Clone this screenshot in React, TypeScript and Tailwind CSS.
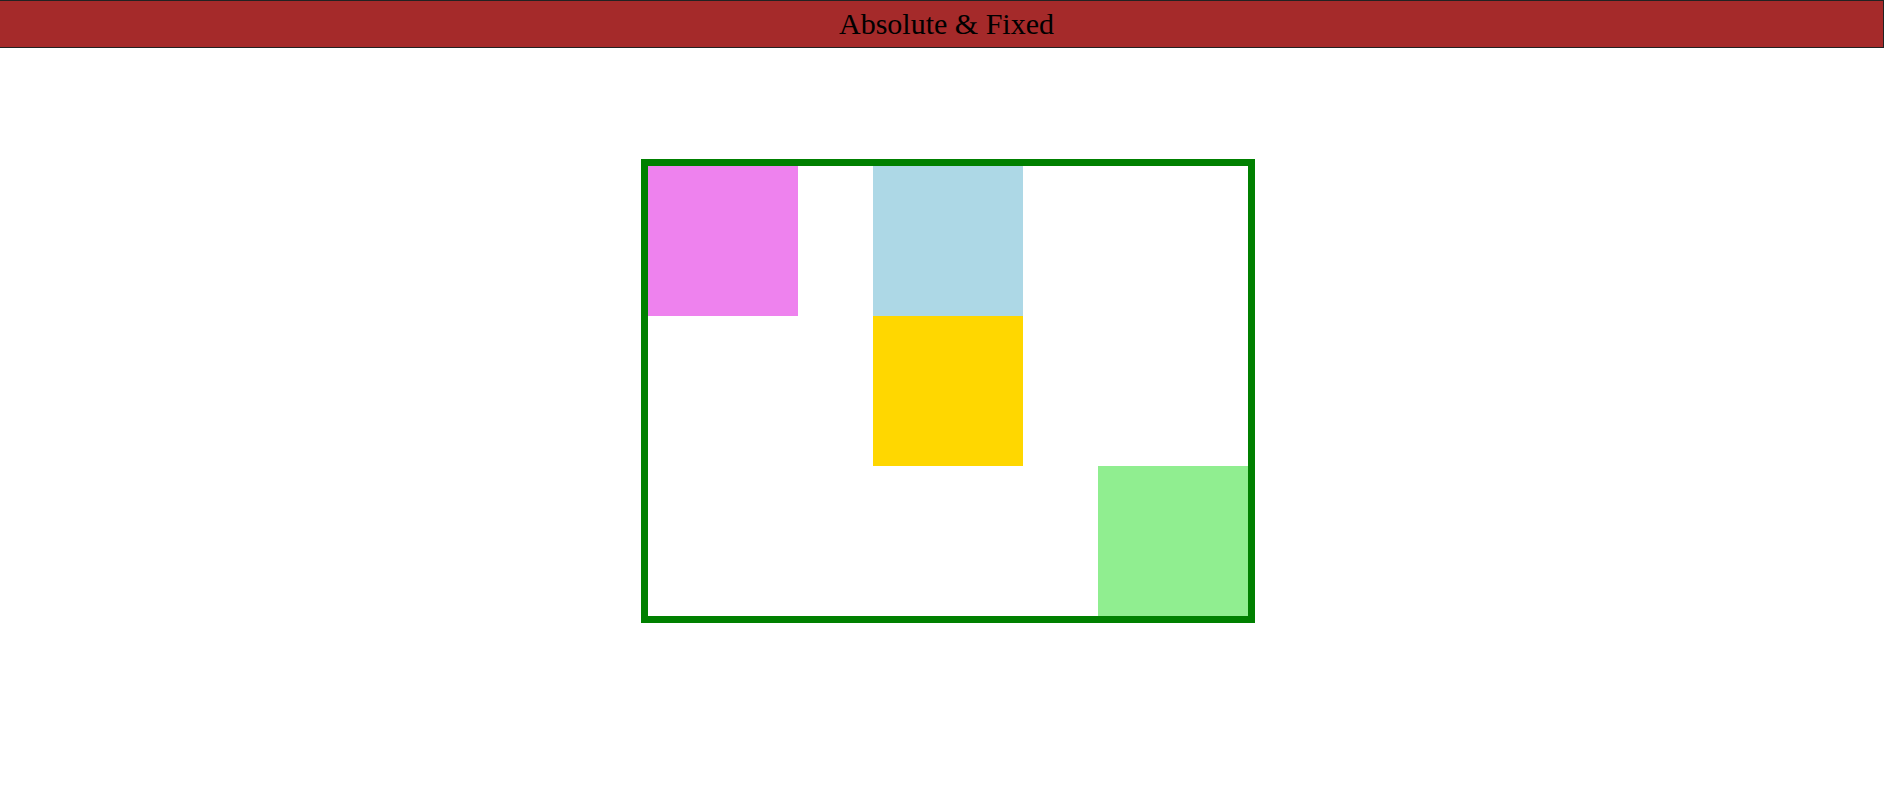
export default function App() {
  return (
    <div className="min-h-[811px] bg-white" style={{ fontFamily: '"Liberation Serif", "Times New Roman", serif' }}>
      <header className="h-[48px] bg-[#a52a2a] border-t border-b border-r border-[#222] text-center text-[30px] leading-[46px] text-black pl-[10px]">
        Absolute &amp; Fixed
      </header>
      <div className="flex justify-center pl-3 mt-[111px]">
        <div className="w-[614px] h-[464px] border-[7px] border-[#008000] grid grid-cols-[150px_75px_150px_75px_150px] grid-rows-[150px_150px_150px]">
          <div className="col-start-1 row-start-1 bg-[#ee82ee]" />
          <div className="col-start-3 row-start-1 bg-[#add8e6]" />
          <div className="col-start-3 row-start-2 bg-[#ffd700]" />
          <div className="col-start-5 row-start-3 bg-[#90ee90]" />
        </div>
      </div>
    </div>
  );
}
